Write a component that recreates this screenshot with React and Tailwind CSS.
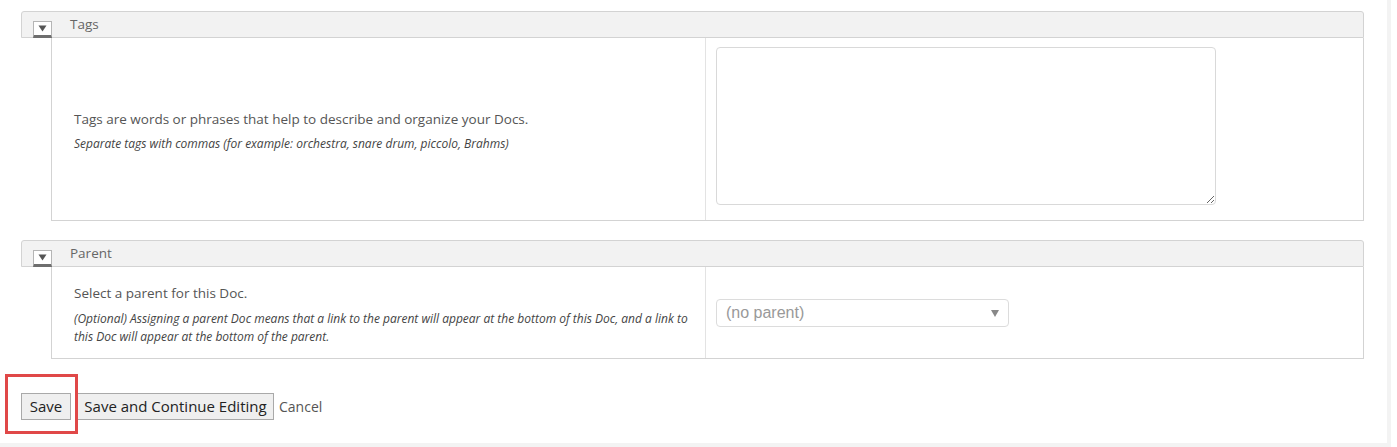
import React from "react";

function Toggle() {
  return (
    <div className="ml-[11px] self-end mb-[-1px] w-[19px] h-[17px] bg-white border border-[#b5b5b5] border-b-[3px] border-b-[#6e6e6e] flex items-center justify-center">
      <svg width="9" height="7" viewBox="0 0 9 7">
        <path d="M0.5 0.5 L8.5 0.5 L4.5 6.5 Z" fill="#555" />
      </svg>
    </div>
  );
}

function Header({ title }) {
  return (
    <div className="h-[27px] bg-[#f2f2f2] border border-[#d3d3d3] rounded-t-[3px] flex items-center">
      <Toggle />
      <span className="ml-[18px] text-[13.5px] text-[#666] leading-none">{title}</span>
    </div>
  );
}

export default function App() {
  const font = { fontFamily: '"Open Sans", "Liberation Sans", sans-serif' };
  return (
    <div className="flex h-[447px] w-[1397px] bg-white overflow-hidden" style={font}>
      <div className="w-[1391px] h-[447px] bg-[#f3f3f3] shrink-0">
        <div className="relative w-[1387px] h-[443px] bg-white pt-[11px] pl-[21px] pr-[23px]">
          {/* Tags */}
          <Header title="Tags" />
          <div className="ml-[30px] flex border-l border-r border-b border-[#d3d3d3] h-[183px]">
            <div className="w-[654px] border-r border-[#e3e3e3] pl-[22px] pr-[16px] flex flex-col justify-center">
              <p className="text-[13.5px] text-[#555] leading-[20px] mt-[4px]">
                Tags are words or phrases that help to describe and organize your Docs.
              </p>
              <p className="text-[12px] italic text-[#444] leading-[18px] mt-[6px]">
                Separate tags with commas (for example: orchestra, snare drum, piccolo, Brahms)
              </p>
            </div>
            <div className="flex-1 pl-[10px] pt-[9px]">
              <textarea className="block w-[500px] h-[158px] border border-[#d9d9d9] rounded-[4px] bg-white outline-none" />
            </div>
          </div>

          {/* Parent */}
          <div className="mt-[19px]">
            <Header title="Parent" />
            <div className="ml-[30px] flex border-l border-r border-b border-[#d3d3d3] h-[92px]">
              <div className="w-[654px] border-r border-[#e3e3e3] pl-[22px] pr-[16px] pt-[16px]">
                <p className="text-[13.5px] text-[#555] leading-[20px]">Select a parent for this Doc.</p>
                <p className="text-[12px] italic text-[#444] leading-[18px] mt-[7px]">
                  (Optional) Assigning a parent Doc means that a link to the parent will appear at the bottom of this Doc, and a link to this Doc will appear at the bottom of the parent.
                </p>
              </div>
              <div className="flex-1 pl-[10px] flex items-center">
                <div className="relative w-[293px] h-[28px] border border-[#dcdcdc] rounded-[4px] bg-white flex items-center">
                  <span className="pl-[9px] text-[16px] text-[#999]" style={{ fontFamily: '"Liberation Sans", Arial, sans-serif' }}>
                    (no parent)
                  </span>
                  <svg className="absolute right-[9px] top-[10px]" width="8" height="7" viewBox="0 0 8 7">
                    <path d="M0 0 L8 0 L4 7 Z" fill="#888" />
                  </svg>
                </div>
              </div>
            </div>
          </div>

          {/* Buttons */}
          <div className="mt-[34px] flex items-center">
            <button className="h-[27px] w-[50px] border border-[#a9a9a9] bg-[#efefef] text-[15px] text-[#222] leading-none">
              Save
            </button>
            <button className="ml-[6px] h-[27px] w-[197px] border border-[#a9a9a9] bg-[#efefef] text-[15px] text-[#222] leading-none">
              Save and Continue Editing
            </button>
            <span className="ml-[5px] text-[14px] text-[#555]">Cancel</span>
          </div>

          {/* annotation */}
          <div className="absolute left-[5px] top-[374px] w-[73px] h-[60px] border-[3px] border-[#e04848]" />
        </div>
      </div>
    </div>
  );
}
